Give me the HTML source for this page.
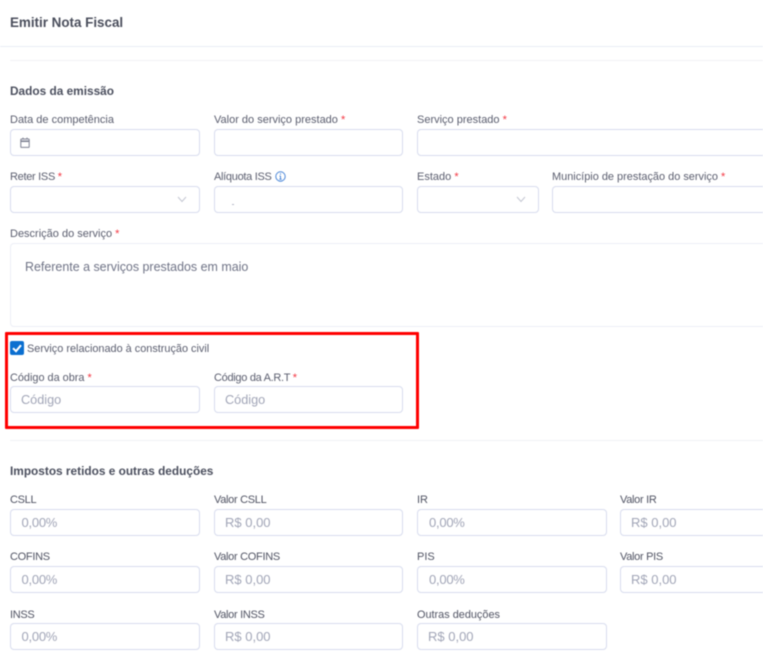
<!DOCTYPE html>
<html lang="pt-BR">
<head>
<meta charset="utf-8">
<title>Emitir Nota Fiscal</title>
<style>
html,body{margin:0;padding:0;background:#fff}
body{width:763px;height:667px;overflow:hidden;position:relative;font-family:"Liberation Sans",sans-serif}
#w{position:absolute;left:0;top:0;width:763px;height:667px;overflow:hidden;filter:blur(.4px)}
.l,.p,.h{position:absolute;white-space:nowrap}
.l{font-size:11px;line-height:14px;color:#5a5d6e}
.l b{color:#f3333f;font-weight:400}
.c{letter-spacing:-.3px}
.h{font-size:11.85px;line-height:16px;font-weight:700;color:#4b4f5e}
.p{font-size:13px;line-height:16px;color:#a1a5b7}
.n{letter-spacing:-.25px}
.i{position:absolute;box-sizing:border-box;height:27px;border:1px solid #d8dcee;border-radius:4px;background:#fff}
.d{position:absolute;height:1px;background:#eef0f6}
svg{position:absolute}
</style>
</head>
<body>
<div id="w">
<div class="h" style="left:10px;top:14px;font-size:13.4px;line-height:18px;color:#4a4e5c">Emitir Nota Fiscal</div>
<div class="d" style="left:0;top:46px;width:763px;background:#e9edf6"></div>
<div class="d" style="left:10px;top:60px;width:753px;background:#f1f2f6"></div>

<div class="h" style="left:10px;top:83px">Dados da emissão</div>

<div class="l" style="left:10px;top:113px">Data de competência</div>
<div class="i" style="left:10px;top:129px;width:190px"></div>
<svg style="left:20px;top:137px" width="10" height="11" viewBox="0 0 10 11" fill="none" stroke="#7e8192" stroke-width="1"><rect x=".8" y="2" width="8.4" height="8.4" rx=".8"/><path d="M1 4.2h8" stroke-width="1.6"/><path d="M3 .6v1.8M7 .6v1.8"/></svg>
<div class="l" style="left:214px;top:113px">Valor do serviço prestado <b>*</b></div>
<div class="i" style="left:214px;top:129px;width:189px"></div>
<div class="l" style="left:417px;top:113px">Serviço prestado <b>*</b></div>
<div class="i" style="left:417px;top:129px;width:360px"></div>

<div class="l c" style="left:10px;top:170px">Reter ISS <b>*</b></div>
<div class="i" style="left:10px;top:186px;width:190px"></div>
<svg style="left:177px;top:196px" width="10" height="7" viewBox="0 0 10 7" fill="none" stroke="#c3c6d2" stroke-width="1"><path d="M1 1l4 4.5L9 1"/></svg>
<div class="l c" style="left:214px;top:170px">Alíquota ISS</div>
<svg style="left:275px;top:171px" width="11" height="11" viewBox="0 0 11 11" fill="none" stroke="#4a86d8" stroke-width="1"><circle cx="5.5" cy="5.5" r="4.7"/><path d="M5.5 5v3M4.3 8.2h2.4M4.5 5h1"/><path d="M5.5 2.4v1.2"/></svg>
<div class="i" style="left:214px;top:186px;width:189px"></div>
<div style="position:absolute;left:232px;top:204px;width:2px;height:1px;background:#b5b8c6"></div>
<div class="l" style="left:417px;top:170px">Estado <b>*</b></div>
<div class="i" style="left:417px;top:186px;width:122px"></div>
<svg style="left:516px;top:196px" width="10" height="7" viewBox="0 0 10 7" fill="none" stroke="#c3c6d2" stroke-width="1"><path d="M1 1l4 4.5L9 1"/></svg>
<div class="l" style="left:552px;top:170px;font-size:10.95px">Município de prestação do serviço <b>*</b></div>
<div class="i" style="left:552px;top:186px;width:230px"></div>

<div class="l" style="left:10px;top:227px">Descrição do serviço <b>*</b></div>
<div class="i" style="left:10px;top:243px;width:780px;height:84px;border-color:#eceef6"></div>
<div class="p" style="left:25px;top:259px;color:#6f7386;font-size:12.45px">Referente a serviços prestados em maio</div>

<div style="position:absolute;left:10px;top:341px;width:14px;height:14px;background:#0b6fd0;border-radius:2px"></div>
<svg style="left:10px;top:341px" width="14" height="14" viewBox="0 0 14 14" fill="none" stroke="#fff" stroke-width="2"><path d="M3 7.2l3 3 5-6"/></svg>
<div class="l" style="left:27px;top:342px;font-size:10.9px">Serviço relacionado à construção civil</div>

<div class="l" style="left:10px;top:371px;font-size:10.9px">Código da obra <b>*</b></div>
<div class="i" style="left:10px;top:386px;width:190px"></div>
<div class="p" style="left:21px;top:392px;font-size:12.7px">Código</div>
<div class="l c" style="left:214px;top:371px">Código da A.R.T <b>*</b></div>
<div class="i" style="left:214px;top:386px;width:189px"></div>
<div class="p" style="left:225px;top:392px;font-size:12.7px">Código</div>

<div style="position:absolute;box-sizing:border-box;left:5px;top:332px;width:414px;height:97px;border:3px solid #f00;border-radius:1px"></div>

<div class="d" style="left:10px;top:440px;width:753px;background:#f0f1f5"></div>
<div class="h" style="left:10px;top:463px">Impostos retidos e outras deduções</div>

<div class="l c" style="left:10px;top:493px;color:#505363">CSLL</div>
<div class="i" style="left:10px;top:509px;width:190px"></div>
<div class="p n" style="left:21.5px;top:515px">0,00%</div>
<div class="l c" style="left:214px;top:493px;color:#505363">Valor CSLL</div>
<div class="i" style="left:214px;top:509px;width:189px"></div>
<div class="p" style="left:225px;top:515px">R$ 0,00</div>
<div class="l" style="left:417px;top:493px;color:#505363">IR</div>
<div class="i" style="left:417px;top:509px;width:190px"></div>
<div class="p n" style="left:429px;top:515px">0,00%</div>
<div class="l c" style="left:620px;top:493px;color:#505363">Valor IR</div>
<div class="i" style="left:620px;top:509px;width:190px"></div>
<div class="p" style="left:631px;top:515px">R$ 0,00</div>

<div class="l c" style="left:10px;top:550px;color:#505363">COFINS</div>
<div class="i" style="left:10px;top:566px;width:190px"></div>
<div class="p n" style="left:21.5px;top:572px">0,00%</div>
<div class="l c" style="left:214px;top:550px;color:#505363">Valor COFINS</div>
<div class="i" style="left:214px;top:566px;width:189px"></div>
<div class="p" style="left:225px;top:572px">R$ 0,00</div>
<div class="l" style="left:417px;top:550px;color:#505363">PIS</div>
<div class="i" style="left:417px;top:566px;width:190px"></div>
<div class="p n" style="left:429px;top:572px">0,00%</div>
<div class="l c" style="left:620px;top:550px;color:#505363">Valor PIS</div>
<div class="i" style="left:620px;top:566px;width:190px"></div>
<div class="p" style="left:631px;top:572px">R$ 0,00</div>

<div class="l c" style="left:10px;top:608px;color:#505363">INSS</div>
<div class="i" style="left:10px;top:623px;width:190px"></div>
<div class="p n" style="left:21.5px;top:629px">0,00%</div>
<div class="l c" style="left:214px;top:608px;color:#505363">Valor INSS</div>
<div class="i" style="left:214px;top:623px;width:189px"></div>
<div class="p" style="left:225px;top:629px">R$ 0,00</div>
<div class="l" style="left:417px;top:608px;font-size:10.9px;color:#505363">Outras deduções</div>
<div class="i" style="left:417px;top:623px;width:190px"></div>
<div class="p" style="left:428px;top:629px">R$ 0,00</div>
</div>
</body>
</html>
